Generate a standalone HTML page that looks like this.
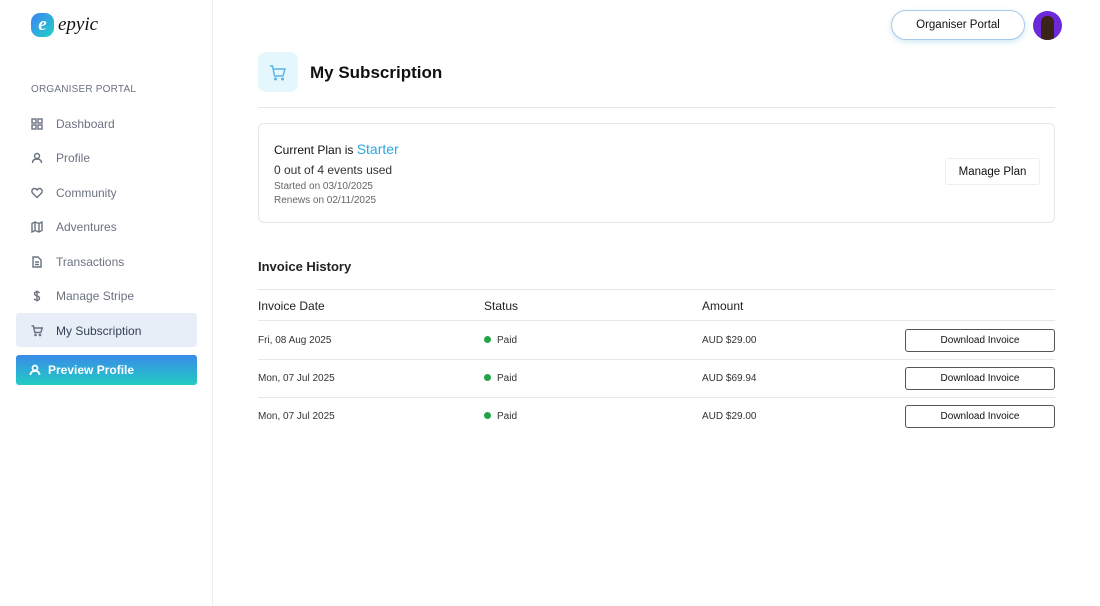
<!DOCTYPE html>
<html><head><meta charset="utf-8"><style>
*{box-sizing:border-box;margin:0;padding:0}
body{width:1100px;height:606px;background:#fff;font-family:"Liberation Sans",sans-serif;position:relative;overflow:hidden;color:#111}
.side{position:absolute;left:0;top:0;width:213px;height:606px;background:#fff;border-right:1px solid #eceef2}
.logo{position:absolute;left:31px;top:13px;display:flex;align-items:center}
.logo .e{width:23px;height:24px;border-radius:9px;background:linear-gradient(135deg,#3b82f6,#22d3c5);color:#fff;font:italic bold 19px "Liberation Serif",serif;text-align:center;line-height:23px}
.logo span{font:italic 19px "Liberation Serif",serif;margin-left:4px;color:#111}
.sect{position:absolute;left:31px;top:84px;font-size:10px;color:#6b7280;letter-spacing:.2px}
.nav{position:absolute;left:16px;width:181px;height:34px;display:flex;align-items:center;padding-left:15px;padding-top:2px;font-size:12px;color:#6b7280}
.nav svg{width:12px;height:12px;margin-right:13px;stroke:#6b7280;fill:none;stroke-width:1.4}
.nav.act{background:#e8eef8;border-radius:3px;color:#334155}
.prev{position:absolute;left:16px;top:355px;width:181px;height:30px;border-radius:3px;background:linear-gradient(#3a8ae8,#22ccc4);color:#fff;font-weight:bold;font-size:12px;display:flex;align-items:center;padding-left:13px}
.prev svg{width:12px;height:12px;margin-right:7px;stroke:#fff;fill:none;stroke-width:1.8}
.op{position:absolute;left:891px;top:10px;width:134px;height:30px;border-radius:15px;border:1px solid #a7c8ea;font-size:11.5px;text-align:center;line-height:29px;box-shadow:0 2px 6px rgba(100,180,220,.3)}
.av{position:absolute;left:1033px;top:11px;width:29px;height:29px;border-radius:50%;background:#6d28d9;overflow:hidden}
.av i{position:absolute;left:8px;top:5px;width:13px;height:24px;border-radius:6px 6px 2px 2px;background:#3a2418}
.hic{position:absolute;left:258px;top:52px;width:40px;height:40px;border-radius:8px;background:#e4f7fd}
.h1{position:absolute;left:310px;top:63px;font-size:17px;font-weight:bold}
.hr{position:absolute;left:258px;top:107px;width:797px;height:1px;background:#e5e7eb}
.card{position:absolute;left:258px;top:123px;width:797px;height:100px;border:1px solid #e5e7eb;border-radius:6px}
.t{position:absolute;white-space:nowrap}
.mp{position:absolute;left:945px;top:158px;width:95px;height:27px;border:1px solid #eceef2;border-radius:3px;font-size:11.5px;text-align:center;line-height:27px}
.row{position:absolute;left:258px;width:797px;height:1px;background:#e5e7eb}
.dl{position:absolute;left:905px;width:150px;height:23px;border:1px solid #555;border-radius:3px;font-size:10px;text-align:center;line-height:22px}
.dot{display:inline-block;width:7px;height:7px;border-radius:50%;background:#22a447;margin-right:6px;vertical-align:0}
</style></head><body>
<div class="side">
<div class="logo"><div class="e">e</div><span>epyic</span></div>
<div class="sect">ORGANISER PORTAL</div>
<div class="nav" style="top:106px"><svg viewBox="0 0 12 12"><rect x="1" y="1" width="4" height="4"/><rect x="7" y="1" width="4" height="4"/><rect x="1" y="7" width="4" height="4"/><rect x="7" y="7" width="4" height="4"/></svg>Dashboard</div>
<div class="nav" style="top:140px"><svg viewBox="0 0 12 12"><circle cx="6" cy="4" r="2.5"/><path d="M1.5 11c0-3 2-4 4.5-4s4.5 1 4.5 4"/></svg>Profile</div>
<div class="nav" style="top:175px"><svg viewBox="0 0 12 12"><path d="M6 10.5L1.5 6C0 4 1.5 1.5 3.5 1.5 5 1.5 6 3 6 3s1-1.5 2.5-1.5C10.5 1.5 12 4 10.5 6z"/></svg>Community</div>
<div class="nav" style="top:209px"><svg viewBox="0 0 12 12"><path d="M1 2.5l3-1.5 4 1.5 3-1.5v8.5l-3 1.5-4-1.5-3 1.5zM4 1v8.5M8 2.5V11"/></svg>Adventures</div>
<div class="nav" style="top:244px"><svg viewBox="0 0 12 12"><path d="M2 1h5l3 3v7H2zM4 6h4M4 8.5h4"/></svg>Transactions</div>
<div class="nav" style="top:278px"><svg viewBox="0 0 12 12"><path d="M6 0.5v11M8.5 3C8 2 7 1.8 6 1.8 4.5 1.8 3.5 2.6 3.5 3.8 3.5 6.5 8.5 5.3 8.5 8.2c0 1.2-1 2-2.5 2-1.3 0-2.3-.5-2.8-1.5"/></svg>Manage Stripe</div>
<div class="nav act" style="top:313px"><svg viewBox="0 0 12 12"><path d="M0.5 1h2l1.3 6.5h6l1.5-4.5H3"/><circle cx="4.5" cy="10" r=".6"/><circle cx="9" cy="10" r=".6"/></svg>My Subscription</div>
<div class="prev"><svg viewBox="0 0 12 12"><circle cx="6" cy="4" r="2.5"/><path d="M1.5 11c0-3 2-4 4.5-4s4.5 1 4.5 4"/></svg>Preview Profile</div>
</div>
<div class="op">Organiser Portal</div>
<div class="av"><i></i></div>
<div class="hic"><svg viewBox="0 0 40 40" width="40" height="40" fill="none" stroke="#5ab4e6" stroke-width="1.4"><path d="M12 14h2.5l2 10h8.5l2-7H15.5"/><circle cx="17.5" cy="27" r=".8"/><circle cx="24.5" cy="27" r=".8"/></svg></div>
<div class="h1">My Subscription</div>
<div class="hr"></div>
<div class="card"></div>
<div class="t" style="left:274px;top:141px;font-size:12px">Current Plan is <span style="color:#2ea7dd;font-size:14px">Starter</span></div>
<div class="t" style="left:274px;top:163px;font-size:12px;color:#333">0 out of 4 events used</div>
<div class="t" style="left:274px;top:181px;font-size:10px;color:#666">Started on 03/10/2025</div>
<div class="t" style="left:274px;top:195px;font-size:10px;color:#666">Renews on 02/11/2025</div>
<div class="mp">Manage Plan</div>
<div class="t" style="left:258px;top:259px;font-size:13px;font-weight:bold;color:#222">Invoice History</div>
<div class="row" style="top:289px"></div>
<div class="t" style="left:258px;top:299px;font-size:12px;color:#222">Invoice Date</div>
<div class="t" style="left:484px;top:299px;font-size:12px;color:#222">Status</div>
<div class="t" style="left:702px;top:299px;font-size:12px;color:#222">Amount</div>
<div class="row" style="top:320px"></div>
<div class="t" style="left:258px;top:335px;font-size:10px;color:#333">Fri, 08 Aug 2025</div>
<div class="t" style="left:484px;top:335px;font-size:10px;color:#333"><span class="dot"></span>Paid</div>
<div class="t" style="left:702px;top:335px;font-size:10px;color:#333">AUD $29.00</div>
<div class="dl" style="top:329px">Download Invoice</div>
<div class="row" style="top:359px"></div>
<div class="t" style="left:258px;top:373px;font-size:10px;color:#333">Mon, 07 Jul 2025</div>
<div class="t" style="left:484px;top:373px;font-size:10px;color:#333"><span class="dot"></span>Paid</div>
<div class="t" style="left:702px;top:373px;font-size:10px;color:#333">AUD $69.94</div>
<div class="dl" style="top:367px">Download Invoice</div>
<div class="row" style="top:397px"></div>
<div class="t" style="left:258px;top:411px;font-size:10px;color:#333">Mon, 07 Jul 2025</div>
<div class="t" style="left:484px;top:411px;font-size:10px;color:#333"><span class="dot"></span>Paid</div>
<div class="t" style="left:702px;top:411px;font-size:10px;color:#333">AUD $29.00</div>
<div class="dl" style="top:405px">Download Invoice</div>
</body></html>
